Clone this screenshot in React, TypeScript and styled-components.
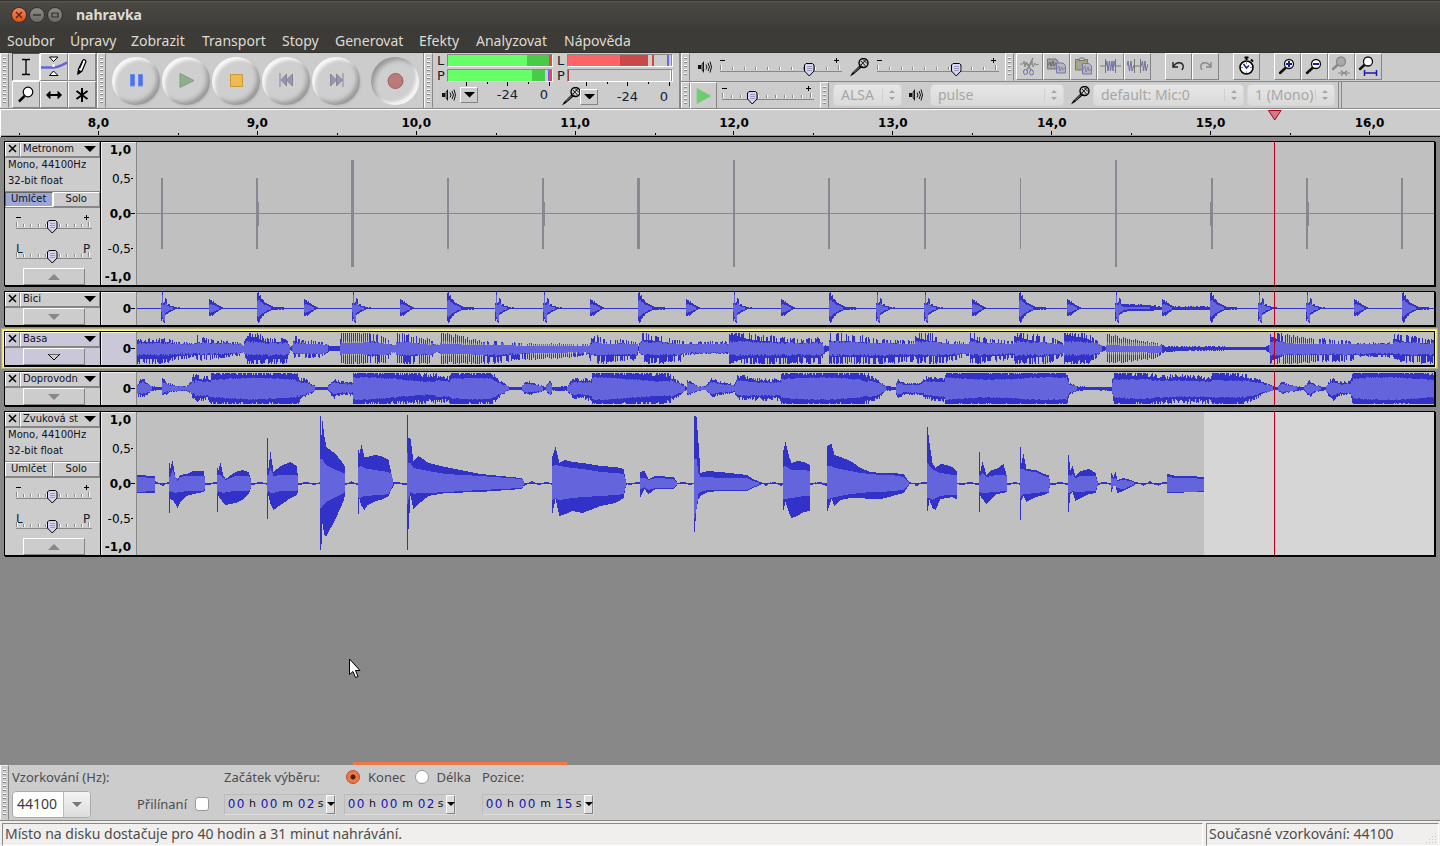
import React from "react";
import styled, { createGlobalStyle, css } from "styled-components";

const UI_FONT = '"Noto Sans", "Open Sans", sans-serif';
const TRACK_FONT = '"DejaVu Sans", sans-serif';

const GlobalStyle = createGlobalStyle`
  *, *::before, *::after { box-sizing: border-box; }
  body { margin: 0; background: #888; font-family: ${UI_FONT}; }
  button, input, select { margin: 0; padding: 0; font: inherit; color: inherit; border-radius: 0; }
  svg { display: block; flex: none; }
`;

const bevel = css`
  border: 1px solid;
  border-color: #fff #848484 #848484 #fff;
`;

/* ---------- window frame ---------- */

const Window = styled.div`
  display: flex;
  flex-direction: column;
  min-height: 100vh;
  overflow: hidden;
`;

const TitleBar = styled.header`
  display: flex;
  align-items: center;
  height: 28px;
  padding: 0 11px;
  gap: 2px;
  border-top: 1px solid #35342f;
  background: linear-gradient(#5a5954 0, #494843 2px, #3e3d39 100%);
`;

const WindowButton = styled.button<{ $close?: boolean }>`
  display: grid;
  place-items: center;
  width: 16px;
  height: 16px;
  border: 1px solid #33322e;
  border-radius: 50%;
  background: ${(p) => (p.$close ? "linear-gradient(#f7855a, #e0501c)" : "linear-gradient(#8b8a84, #6b6a65)")};
`;

const Title = styled.h1`
  margin: 0 0 0 11px;
  font-size: 14px;
  line-height: 20px;
  color: #dfdbd2;
`;

const MenuBar = styled.nav`
  display: grid;
  grid-template-columns: 63px 61px 71px 80px 53px 84px 57px 88px auto;
  justify-content: start;
  height: 25px;
  padding-left: 7px;
  background: #3c3b37;
  border-bottom: 1px solid #31302c;
`;

const MenuItem = styled.button`
  border: 0;
  background: none;
  text-align: left;
  white-space: nowrap;
  font-size: 14px;
  line-height: 26px;
  color: #dfdbd2;
`;

/* ---------- toolbars ---------- */

const ToolDock = styled.section`
  display: flex;
  height: 56px;
  background: #ccc;
  border-bottom: 1px solid #888;
`;

const DockStack = styled.div`
  display: flex;
  flex: 1;
  flex-direction: column;
  border-left: 2px solid #888;
`;

const DockRow = styled.div`
  display: flex;
  height: 28px;
  & + & { border-top: 1px solid #888; height: 27px; }
`;

const Grip = styled.div`
  flex: none;
  width: 9px;
  padding: 3px 2px;
  border: 1px solid;
  border-color: #eee #888 #ccc #fff;
  &::before {
    content: "";
    display: block;
    height: 100%;
    background: repeating-linear-gradient(#fff 0 1px, #888 1px 2px, transparent 2px 4px);
  }
`;

const ToolGrid = styled.div`
  display: grid;
  grid-template-columns: repeat(3, 28px);
  grid-template-rows: 28px 27px;
  margin-left: 3px;
  border-right: 1px solid #888;
`;

const ToolButton = styled.button<{ $down?: boolean }>`
  display: grid;
  place-items: center;
  ${bevel}
  ${(p) => p.$down && "border-color: #555 #fff #fff #555;"}
  background: #ccc;
`;

const TransportBar = styled.div`
  display: flex;
  align-items: center;
  gap: 2px;
  padding: 0 4px 0 6px;
  border-right: 1px solid #888;
`;

const RoundButton = styled.button<{ $down?: boolean }>`
  display: grid;
  place-items: center;
  width: 48px;
  height: 48px;
  border: 0;
  border-radius: 50%;
  background: #cfcfcf;
  box-shadow: ${(p) =>
    p.$down
      ? "inset 4px 4px 4px -1px #999, inset -4px -4px 3px -1px #f4f4f4"
      : "inset 4px 4px 3px -1px #f6f6f6, inset -4px -4px 4px -1px #999, 1px 1px 2px #bbb"};
  &:last-child { margin-left: 9px; }
`;

const MeterBar = styled.div`
  display: flex;
  gap: 4px;
  width: 246px;
  padding: 1px 2px 0 4px;
  font: 13px/14px ${TRACK_FONT};
  color: #123;
`;

const Meter = styled.div`
  display: grid;
  grid-template-columns: 10px 106px;
  grid-template-rows: 15px 13px 5px 16px;
`;

const MeterTrack = styled.div`
  display: flex;
  height: 13px;
  border: 1px solid;
  border-color: #888 #fff #fff #888;
`;

const Level = styled.i<{ $w: number; $c?: string }>`
  flex: none;
  width: ${(p) => p.$w}px;
  background: ${(p) => p.$c || "transparent"};
`;

const MeterFoot = styled.div`
  grid-column: 1 / 3;
  display: grid;
  grid-template-columns: 18px 18px 40px 30px;
  align-items: center;
  padding-left: 5px;
  text-align: right;
`;

const DropButton = styled.button`
  display: grid;
  place-items: center;
  width: 18px;
  height: 16px;
  ${bevel}
  background: #ccc;
`;

const Group = styled.div<{ $pad?: string; $gap?: number }>`
  display: flex;
  align-items: center;
  gap: ${(p) => p.$gap ?? 8}px;
  padding: ${(p) => p.$pad || "0"};
`;

const EditGroup = styled.div`
  display: flex;
  margin-left: 2px;
  & + & { margin-left: 14px; }
`;

const EditButton = styled.button`
  display: grid;
  place-items: center;
  width: 27px;
  height: 27px;
  ${bevel}
  background: #ccc;
`;

const SelectShell = styled.label<{ $w: number }>`
  display: flex;
  position: relative;
  width: ${(p) => p.$w}px;
  height: 22px;
  svg { position: absolute; right: 6px; top: 5px; pointer-events: none; }
`;

const SelectBox = styled.select`
  width: 100%;
  appearance: none;
  padding: 0 20px 0 7px;
  border: 1px solid #d6d6d6;
  border-radius: 4px;
  background: linear-gradient(#e6e6e6, #dadada);
  font-size: 14px;
  line-height: 20px;
  color: #a8a6a2;
  opacity: 1;
`;

const DeviceEnd = styled.div`
  width: 4px;
  margin-left: 3px;
  border: solid #888;
  border-width: 0 1px;
`;

/* ---------- timeline ---------- */

const Timeline = styled.div`
  display: grid;
  position: relative;
  grid-template-columns: repeat(9, 1fr);
  height: 28px;
  padding-left: 18px;
  margin-right: -9px;
  background: #ccc;
  border: solid #fff;
  border-width: 1px 0 0 1px;
  box-shadow: inset 0 -1px 0 #000, inset 0 -2px 0 #999;
`;

const Second = styled.div`
  display: flex;
  flex-direction: column;
  align-items: center;
  padding-top: 5px;
  background:
    linear-gradient(#000, #000) left 0 bottom 2px / 1px 2px no-repeat,
    linear-gradient(#000, #000) 50% calc(100% - 2px) / 1px 4px no-repeat;
  font: bold 12px/16px ${TRACK_FONT};
`;

const PlayMarker = styled.svg`
  position: absolute;
  left: 1267px;
  top: 0;
`;

/* ---------- tracks ---------- */

const TrackArea = styled.main`
  display: flex;
  position: relative;
  flex: 1;
  flex-direction: column;
  gap: 5px;
  padding: 4px 5px 8px 4px;
  background: #888;
`;

const TrackBox = styled.article<{ $focus?: boolean }>`
  display: grid;
  grid-template-columns: 95px 37px 1fr;
  border: 1px solid #000;
  background: #ccc;
  font-family: ${TRACK_FONT};
  ${(p) => p.$focus
    ? "background: #c9c7d8; box-shadow: 0 1px 0 #000, 0 0 0 1px #fff880, 0 0 0 2px #ece27c, 0 0 0 3px #aeac86;"
    : "box-shadow: 1px 1px 0 #000;"}
`;

const TrackPanel = styled.div`
  display: flex;
  flex-direction: column;
`;

const TrackHead = styled.div`
  display: grid;
  grid-template-columns: 15px 1fr;
  height: 16px;
  border-bottom: 1px solid #888;
`;

const HeadButton = styled.button`
  display: flex;
  align-items: center;
  justify-content: space-between;
  padding: 0 3px 2px 2px;
  ${bevel}
  background: none;
  font-size: 10px;
  line-height: 11px;
  color: #112;
  white-space: nowrap;
`;

const TrackInfo = styled.p`
  height: 35px;
  margin: -1px 0 0;
  padding-left: 3px;
  border-bottom: 1px solid #888;
  font-size: 10px;
  line-height: 16px;
  color: #112;
`;

const MuteRow = styled.div`
  display: grid;
  grid-template-columns: 1fr 1fr;
  height: 16px;
  border-bottom: 1px solid #888;
`;

const MuteButton = styled.button<{ $on?: boolean }>`
  padding-bottom: 2px;
  ${bevel}
  background: ${(p) => (p.$on ? "#9ca8d3" : "none")};
  ${(p) => p.$on && "border-color: #666 #fff #fff #666;"}
  font-size: 10px;
  line-height: 11px;
  color: #112;
`;

const PanelSliders = styled.div`
  display: flex;
  flex-direction: column;
  gap: 6px;
  padding: 6px 0 4px 11px;
`;

const FoldButton = styled.button`
  display: grid;
  place-items: center;
  width: 62px;
  height: 17px;
  margin-left: 18px;
  ${bevel}
  background: none;
`;

const VRuler = styled.div<{ $mini?: boolean }>`
  display: grid;
  grid-template-rows: ${(p) => (p.$mini ? "33px" : "15px 43px 27px 43px 13px")};
  align-items: center;
  border: solid;
  border-width: 0 1px 0 1px;
  border-color: #000;
  border-right-color: #888;
  box-shadow: inset 1px 1px 0 #eee;
  font-size: 12px;
  line-height: 14px;
`;

const Mark = styled.span<{ $bold?: boolean; $tick?: number }>`
  display: flex;
  align-items: center;
  justify-content: flex-end;
  padding-right: ${(p) => 5 - (p.$tick || 0)}px;
  font-weight: ${(p) => (p.$bold ? "bold" : "normal")};
  &::after {
    content: "";
    width: ${(p) => p.$tick || 0}px;
    height: 1px;
    background: #000;
  }
`;

const Wave = styled.svg`
  width: 100%;
  min-width: 0;
`;

const FocusStrip = styled.div`
  position: absolute;
  left: 353px;
  bottom: 0;
  width: 214px;
  height: 3px;
  background: #f07746;
`;

const Pointer = styled.svg`
  position: absolute;
  left: 348px;
  top: 521px;
`;

/* ---------- sliders ---------- */

const SliderShell = styled.label<{ $w: number; $tall?: boolean }>`
  position: relative;
  display: block;
  width: ${(p) => p.$w}px;
  height: ${(p) => (p.$tall ? 24 : 20)}px;
  input {
    position: absolute;
    inset: 0;
    width: 100%;
    height: 100%;
    opacity: 0;
  }
`;

/* ---------- selection bar and status ---------- */

const SelectionBar = styled.section`
  display: flex;
  height: 56px;
  background: #ccc;
  border-bottom: 1px solid #888;
  color: #4c4c4c;
`;

const SelectionGrid = styled.div`
  display: grid;
  grid-template-columns: 212px 120px 138px auto;
  grid-template-rows: 24px 30px;
  align-items: center;
  padding-left: 3px;
  font-size: 13px;
  line-height: 16px;
`;

const RateBox = styled.div`
  display: grid;
  grid-template-columns: 50px 27px;
  height: 27px;
  margin-right: 46px;
  border: 1px solid #aaa;
  border-radius: 4px;
  overflow: hidden;
  background: #fff;
  color: #3c3c3c;
  input { min-width: 0; border: 0; padding-left: 4px; font-size: 14px; background: none; }
  button { display: grid; place-items: center; border: 0; border-left: 1px solid #bbb; background: linear-gradient(#f4f4f4, #dcdcdc); }
`;

const Tick = styled.input`
  appearance: none;
  width: 14px;
  height: 14px;
  border: 1px solid #999;
  border-radius: 3px;
  background: #fff;
`;

const Radio = styled.input`
  appearance: none;
  width: 14px;
  height: 14px;
  border: 1px solid #999;
  border-radius: 50%;
  background: #fff;
  &:checked {
    border-color: #b5522c;
    background: radial-gradient(#4a2416 0 2px, #f07746 3px);
  }
`;

const ChoiceLabel = styled.label`
  display: flex;
  align-items: center;
  gap: 8px;
`;

const TimeBox = styled.div`
  display: flex;
  align-items: center;
  justify-self: start;
  height: 21px;
  padding-left: 2px;
  border: 1px solid;
  border-color: #bbb #ddd #ddd #bbb;
  font: 12px/16px ${TRACK_FONT};
  color: #111;
`;

const Unit = styled.span<{ $unit: string }>`
  width: ${(p) => ({ h: 15, m: 19, s: 11 })[p.$unit]}px;
  text-align: center;
  font-size: 11px;
`;

const Digit = styled.input`
  width: 9px;
  border: 0;
  background: none;
  text-align: center;
  color: #1414b4;
`;

const TimeDrop = styled.button`
  display: grid;
  place-items: center;
  width: 9px;
  height: 19px;
  ${bevel}
  background: #ddd;
`;

const StatusBar = styled.footer`
  display: grid;
  grid-template-columns: 1fr 233px;
  gap: 3px;
  height: 25px;
  padding: 2px 1px 0 2px;
  background: #f1efed;
  font-size: 14px;
  line-height: 22px;
  color: #4c4c4c;
`;

const StatusField = styled.div`
  display: flex;
  justify-content: space-between;
  align-items: flex-end;
  padding-left: 2px;
  border: 1px solid;
  border-color: #888 #fff #fff #888;
  overflow: hidden;
  white-space: nowrap;
`;

/* ---------- icons ---------- */

const Down = ({ w = 12, fill = "#000", up = false, line }: { w?: number; fill?: string; up?: boolean; line?: string }) => (
  <svg width={w} height={w / 2} viewBox="0 0 12 6">
    <path d={up ? "M0 6L6 0L12 6z" : "M0 0H12L6 6z"} fill={fill} stroke={line} />
  </svg>
);

const Speaker = () => (
  <svg width="14" height="14" viewBox="0 0 14 14" fill="none" stroke="#111">
    <path d="M0 5H3L6 1V13L3 9H0z" fill="#111" stroke="none" />
    <path d="M4 4V10" stroke="#ccc" />
    <path d="M8 4.500Q10 7 8 9.500M10 3Q13 7 10 11M12 1.500Q15 7 12 12.500" />
  </svg>
);

const Mic = () => (
  <svg width="19" height="19" viewBox="0 0 19 19">
    <path d="M0 18.500L2 15L10 7L12 9L4 16z" fill="#000" />
    <path d="M4 14.500L9.500 9" stroke="#999" />
    <circle cx="13.500" cy="5" r="4.500" fill="#ccc" stroke="#000" strokeWidth="1.400" />
    <path d="M9.500 6L13 9.500M11 3L15.500 8M13 1.500L17 5.500M16 1.500L11 7" stroke="#000" strokeWidth=".9" />
  </svg>
);

const Lens = ({ sign, dim, fit }: { sign?: "+" | "-"; dim?: boolean; fit?: boolean }) => {
  const ink = dim ? "#888" : "#111";
  return (
    <svg width="21" height="21" viewBox="0 0 21 21" fill="none">
      <path d={fit || dim ? "M2 13L7.500 8" : "M3 17L9 11.500"} stroke={ink} strokeWidth="2.500" strokeLinecap="round" />
      <circle cx={fit || dim ? 10 : 12} cy={fit || dim ? 5.5 : 8} r="4.500" fill={dim ? "#aaa" : "#fff"} stroke={ink} strokeWidth="1.300" />
      {sign && <path d={sign === "+" ? "M9 8H15M12 5V11" : "M9 8H15"} stroke="#1c1ca0" strokeWidth="2" />}
      {fit && <path d="M6.500 14V20M18.500 14V20M7 17H18" stroke="#1c1ca0" strokeWidth="1.500" />}
      {dim && <path d="M7 17H12M14 17H19M10 14.500L12.500 17L10 19.500M16 14.500L13.500 17L16 19.500" stroke="#888" strokeWidth="1.200" />}
    </svg>
  );
};

const ResizeDots = () => (
  <svg width="13" height="13" viewBox="0 0 13 13" shapeRendering="crispEdges">
    <path
      d="M10 1h1v1h-1zM7 4h1v1h-1zM10 4h1v1h-1zM4 7h1v1h-1zM7 7h1v1h-1zM10 7h1v1h-1zM1 10h1v1h-1zM4 10h1v1h-1zM7 10h1v1h-1zM10 10h1v1h-1z"
      fill="#cbc8c4"
    />
  </svg>
);

const toolIcons: Record<string, React.ReactNode> = {
  "Výběr": (
    <svg width="24" height="24" viewBox="0 0 24 24" fill="none" stroke="#000" strokeWidth="1.300">
      <path d="M8 4.500H11L12 5.500L13 4.500H16M8 19.500H11L12 18.500L13 19.500H16M12 5V19" />
    </svg>
  ),
  "Obálka": (
    <svg width="26" height="24" viewBox="0 0 26 24">
      <path d="M0 12.500H10Q16 13 26 7.500" fill="none" stroke="#6464dc" strokeWidth="2.500" />
      <path d="M8.500 2H17L12.500 6.500zM8.500 20.500H17L12.500 16z" fill="#fff" stroke="#000" />
      <circle cx="12.500" cy="10.500" r="1.500" fill="#fff" />
    </svg>
  ),
  "Kreslení": (
    <svg width="24" height="24" viewBox="0 0 24 24" stroke="#000">
      <path d="M8 19L8.500 14L13 5Q15 4 16 6.500L12 16z" fill="#fff" strokeWidth="1.200" />
      <path d="M8 19L8.500 15L11 16.500z" fill="#000" />
      <path d="M12.500 6.500L9.500 13.500" strokeWidth="1.200" />
    </svg>
  ),
  "Lupa": (
    <svg width="24" height="24" viewBox="0 0 24 24">
      <path d="M5 18.500L10.500 13" stroke="#000" strokeWidth="2.500" />
      <circle cx="14" cy="9" r="4.800" fill="#fff" stroke="#000" strokeWidth="1.200" />
    </svg>
  ),
  "Posun": (
    <svg width="24" height="24" viewBox="0 0 24 24" stroke="#000" fill="#000">
      <path d="M6 12H18" strokeWidth="2" />
      <path d="M4.500 12L8 8.500V15.500zM19.500 12L16 8.500V15.500z" />
    </svg>
  ),
  "Vše": (
    <svg width="24" height="24" viewBox="0 0 24 24" stroke="#000" strokeWidth="2">
      <path d="M12 5V19M6.500 8L17.500 16M17.500 8L6.500 16" />
    </svg>
  ),
};

const transportIcons: Record<string, React.ReactNode> = {
  "Pozastavit": <path d="M6.500 6.500H10.500V18H6.500zM14.500 6.500H18.500V18H14.500z" fill="#4a72ee" stroke="#6a8af0" />,
  "Přehrát": <path d="M6 5.500L20 12.500L6 19.500z" fill="#8fad8f" stroke="#7f9f7f" />,
  "Zastavit": <path d="M6.500 6.500H18.500V18.500H6.500z" fill="#efbb51" stroke="#c99a3a" />,
  "Na začátek": <path d="M6 5V19M18.500 6V18L12.500 12zM12.500 6V18L7 12z" fill="#9c94ac" stroke="#8a829c" />,
  "Na konec": <path d="M19 5V19M6.500 6V18L12.500 12zM12.500 6V18L18.500 12z" fill="#9c94ac" stroke="#8a829c" />,
  "Nahrát": <circle cx="12.500" cy="13" r="7.500" fill="#bd7878" stroke="#946464" />,
};

const editIcons: Record<string, React.ReactNode> = {
  cut: (
    <>
      <path d="M1 8H4L5 5L6 11L7 6L8 9H12L13 5L14 11L16 7L17 9L20 8" stroke="#888" />
      <path d="M14 2L8 14M8 7L12 14" stroke="#888" strokeWidth="1.500" />
      <ellipse cx="6.500" cy="16" rx="2" ry="2.500" stroke="#6a6aa8" />
      <ellipse cx="12.500" cy="16.500" rx="2" ry="2.500" stroke="#6a6aa8" />
    </>
  ),
  copy: (
    <>
      <path d="M1.500 3H10L12 5V13H1.500z" fill="#a2a2a2" stroke="#777" />
      <path d="M2 9L4 6L5 10L7 5L8 10L10 7" stroke="#666" />
      <path d="M10.500 7H17L19.500 9.500V17H10.500z" fill="#b4b4c4" stroke="#7777b0" />
      <path d="M11 13L13 10L14 15L16 11L17 14L19 12" stroke="#888" />
    </>
  ),
  paste: (
    <>
      <path d="M2.500 3.500H14.500V14H2.500z" fill="#aaa488" stroke="#777" />
      <path d="M5.500 4.500L7 2H10.500L12 4.500z" fill="#ccc" stroke="#777" />
      <path d="M9.500 7.500H16L18.500 10V18H9.500z" fill="#b4b4c4" stroke="#7777b0" />
      <path d="M10 13L12 10L13 16L15 11L16 15L18 13" stroke="#888" />
    </>
  ),
  trim: (
    <>
      <path d="M5.500 3V17M15.500 3V17M0 10H5M16 10H21" stroke="#777" />
      <path d="M6 10L7 5L8 15L9.500 5L10.500 15L12 5L13 15L14 5L15 10" stroke="#7070aa" />
    </>
  ),
  silence: (
    <>
      <path d="M7.500 3V17M13.500 3V17M8 10H13" stroke="#777" />
      <path d="M0 10L1 5L2.500 15L4 5L5 15L7 9M14 10L15.500 5L16.500 15L18 5L19 15L21 8" stroke="#7070aa" />
    </>
  ),
  undo: <path d="M5 6V11H10M5 11Q8 5.500 13 7Q17 9 14 14" stroke="#222" strokeWidth="1.400" />,
  redo: <path d="M16 6V11H11M16 11Q13 5.500 8 7Q4 9 7 14" stroke="#888" strokeWidth="1.400" />,
  clock: (
    <>
      <path d="M8.500 1.500H12.500M10.500 1V4M15 3.500L17 5.500" stroke="#000" strokeWidth="2" />
      <circle cx="10.500" cy="11.500" r="6.500" fill="#fff" stroke="#000" strokeWidth="1.600" />
      <path d="M10.500 5.500V8M10.500 15.500V17M5 11.500H7M14 11.500H16" stroke="#888" />
      <path d="M7.500 8L10.500 12L13 9.500" stroke="#1c1ca0" strokeWidth="1.500" />
    </>
  ),
};

const EditGlyph = ({ name }: { name: string }) => (
  <svg width="21" height="21" viewBox="0 0 21 21" fill="none">{editIcons[name]}</svg>
);

/* ---------- controls ---------- */

type SliderProps = { label: string; w: number; at: number; steps?: number; ends?: [string, string] };

const Slider = ({ label, w, at, steps = 10, ends }: SliderProps) => {
  const ticks = Array.from({ length: steps + 1 }, (_, i) => Math.round(1 + (i * (w - 4)) / steps));
  const top = ends ? 4 : 0;
  return (
    <SliderShell $w={w} $tall={!!ends}>
      <svg width={w} height={20 + top} shapeRendering="crispEdges">
        {ends ? (
          <g fontSize="12" fontFamily="DejaVu Sans" fill="#123">
            <text x="0" y="13">{ends[0]}</text>
            <text x={w - 9} y="13">{ends[1]}</text>
          </g>
        ) : (
          <path d={`M0 3.500H5M${w - 8} 3.500H${w - 3}M${w - 5.5} 1V6`} stroke="#000" />
        )}
        <g transform={`translate(0 ${top})`}>
          {ticks.map((x, i) => {
            const edge = i === 0 || i === steps;
            return (
              <React.Fragment key={x}>
                <rect x={x - 1} y={edge ? 8 : 10} width="1" height={edge ? 5 : 3} fill="#888" />
                <rect x={x} y={edge ? 8 : 10} width="1" height={edge ? 5 : 3} fill="#fff" />
              </React.Fragment>
            );
          })}
          <rect x="0" y="14" width={w} height="1" fill="#888" />
          <g transform={`translate(${at - 5} 6)`} shapeRendering="auto">
            <path d="M.5 2L2 .5H8.500L10 2V8L5.250 13L.5 8z" fill="#d4d4ee" stroke="#000" />
            <path d="M3 3.500H8M3 5.500H8M3 7.500H8" stroke="#9a9ac4" />
          </g>
        </g>
      </svg>
      <input type="range" min={0} max={w} defaultValue={at} aria-label={label} />
    </SliderShell>
  );
};

const DeviceSelect = ({ label, w, value }: { label: string; w: number; value: string }) => (
  <SelectShell $w={w}>
    <SelectBox disabled aria-label={label} defaultValue={value}>
      <option>{value}</option>
    </SelectBox>
    <svg width="14" height="12" viewBox="0 0 14 12">
      <path d="M0 -2V14" stroke="#c0c0c0" />
      <path d="M7 4L10 1L13 4zM7 8L10 11L13 8z" fill="#a6a6a6" />
    </svg>
  </SelectShell>
);

const TimeField = ({ label, value }: { label: string; value: string }) => (
  <TimeBox role="group" aria-label={label}>
    {["h", "m", "s"].map((unit, i) => (
      <React.Fragment key={unit}>
        <Digit defaultValue={value[i * 2]} maxLength={1} aria-label={`${label} ${unit} 1`} />
        <Digit defaultValue={value[i * 2 + 1]} maxLength={1} aria-label={`${label} ${unit} 2`} />
        <Unit $unit={unit}>{unit}</Unit>
      </React.Fragment>
    ))}
    <TimeDrop aria-label={`${label} formát`}><Down w={8} /></TimeDrop>
  </TimeBox>
);

/* ---------- waveforms ---------- */

const VIEW_W = 1297;
const LEFT = 137;
const PLAYHEAD = 1137;

type Column = [number, number, number, number];
type Key = number[];

const noise = (n: number) => {
  const v = Math.sin(n * 127.1 + 11.7) * 43758.5453;
  return v - Math.floor(v);
};

/* Linear interpolation between envelope keys, one value list per pixel column. */
const sample = (keys: Key[], x: number): number[] => {
  let i = 0;
  while (i < keys.length - 2 && keys[i + 1][0] <= x) i++;
  const a = keys[i];
  const b = keys[i + 1];
  const t = Math.max(0, Math.min(1, (x - a[0]) / (b[0] - a[0])));
  return a.slice(1).map((v, k) => v + (b[k + 1] - v) * t);
};

const columns = (fn: (x: number) => Column) => Array.from({ length: VIEW_W }, (_, i) => fn(i + LEFT));

const toPaths = (cols: Column[], mid: number): [string, string] => {
  let outer = "";
  let inner = "";
  cols.forEach(([u, d, iu, id], x) => {
    const [a, b, c, e] = [u, d, iu, id].map(Math.round);
    if (u >= 0) outer += `M${x} ${mid - a}h1V${mid + b + 1}h-1z`;
    if (c + e > 0) inner += `M${x} ${mid - c}h1V${mid + e + 1}h-1z`;
  });
  return [outer, inner];
};

/* Drum hits: one pixel profile per kind of hit. */
const hits: Record<string, [number[], number[], number[], number[]]> = {
  A: [
    [5, 16, 5, 6, 10, 9, 3, 4, 4, 2, 2, 2, 2, 1, 1, 1, 0, 1, 1],
    [12, 10, 13, 14, 6, 5, 5, 4, 3, 3, 2, 2, 1, 1, 0, 0, 0, 0, 0],
    [3, 13, 3, 3, 5, 4, 2, 2, 1, 1, 1, 1],
    [3, 8, 11, 12, 4, 3, 3, 2, 1, 1, 1, 1],
  ],
  B: [
    [9, 8, 8, 6, 7, 5, 5, 4, 3, 3, 2, 2, 1, 1, 0],
    [7, 7, 6, 7, 6, 5, 4, 3, 3, 2, 1, 1, 0, 0, 0],
    [3, 4, 4, 3, 3, 3, 2, 2, 1, 1],
    [3, 4, 3, 3, 3, 2, 2, 1, 1, 1],
  ],
  C: [
    [15, 16, 12, 13, 9, 9, 8, 6, 5, 5, 4, 4, 3, 3, 2, 2, 1, 1, 1, 1, 1, 1, 1, 1, 1, 1, 1, 0],
    [12, 14, 13, 10, 9, 7, 7, 5, 4, 4, 3, 3, 2, 2, 1, 1, 1, 1, 1, 1, 1, 0, 1, 1, 0, 1, 1, 0],
    [7, 8, 8, 6, 6, 5, 4, 3, 3, 3, 2, 2, 1, 1],
    [7, 8, 7, 6, 5, 4, 4, 3, 3, 2, 1, 1, 1, 1],
  ],
};

const drumHits: [string, number][] = [
  ["A", 161], ["B", 209], ["C", 257], ["B", 304], ["A", 352], ["B", 400], ["C", 447], ["A", 495], ["A", 543],
  ["B", 590], ["C", 638], ["B", 686], ["A", 733], ["B", 781], ["C", 829], ["A", 876], ["A", 924], ["B", 972],
  ["C", 1019], ["B", 1067], ["A", 1115], ["B", 1162], ["C", 1210], ["A", 1258], ["A", 1306], ["B", 1354], ["C", 1402],
];

const drumWave = columns((x) => {
  const out: Column = [0, 0, 0, 0];
  if (x > 1118 && x < 1212) {
    const s = x < 1156 ? 4 - (x - 1118) / 19 : 1;
    out[0] = s + noise(x) * 0.8;
    out[1] = s * 0.7;
    out[2] = x < 1150 ? 1 : 0;
  }
  drumHits.forEach(([kind, at]) => {
    const dx = x - at;
    if (dx < 0) return;
    hits[kind].forEach((profile, k) => {
      out[k] = Math.max(out[k], profile[dx] || 0);
    });
  });
  return out;
});

/* x, peak up, peak down, stripe depth */
const bassKeys: Key[] = [
  [137, 8, 14, 0.3], [165, 9, 14, 0.3], [175, 6, 11, 0.3], [195, 5, 8, 0.3], [197, 12, 11, 0.5], [205, 9, 11, 0.5],
  [220, 7, 9, 0.3], [238, 6, 7, 0.3], [243, 3, 4, 0.2], [247, 15, 15, 0.2], [256, 15, 15, 0.3], [265, 9, 15, 0.3],
  [286, 9, 14, 0.3], [290, 1, 1, 0], [292, 3, 3, 0], [293, 12, 8, 0.4], [300, 8, 9, 0.4], [320, 6, 8, 0.4],
  [330, 2, 2, 0], [339, 2, 2, 0], [341, 15, 15, 0.7], [362, 15, 15, 0.65], [372, 14, 15, 0.5], [386, 10, 14, 0.6],
  [391, 4, 4, 0.2], [395, 4, 4, 0.2], [396, 15, 15, 0.6], [405, 13, 15, 0.5], [430, 8, 14, 0.6], [434, 4, 4, 0.2],
  [439, 4, 4, 0.2], [440, 15, 15, 0.7], [455, 12, 15, 0.7], [480, 7, 15, 0.6], [495, 6, 14, 0.4], [515, 5, 11, 0.5],
  [535, 4, 10, 0.6], [560, 4, 9, 0.6], [588, 4, 6, 0.5], [590, 9, 12, 0.5], [597, 12, 14, 0.5], [605, 7, 14, 0.5],
  [620, 8, 12, 0.4], [636, 6, 11, 0.4], [638, 2, 2, 0], [642, 15, 12, 0.5], [650, 13, 15, 0.4], [665, 10, 14, 0.4],
  [680, 7, 12, 0.5], [684, 6, 6, 0.4], [700, 6, 5, 0.3], [728, 6, 5, 0.3], [729, 15, 15, 0.1], [748, 15, 15, 0.4],
  [760, 12, 15, 0.4], [780, 10, 15, 0.4], [800, 8, 14, 0.4], [820, 10, 15, 0.4], [823, 3, 5, 0.3], [828, 2, 2, 0],
  [829, 15, 15, 0.5], [850, 13, 15, 0.5], [880, 8, 15, 0.4], [914, 7, 12, 0.4], [916, 15, 14, 0.3], [930, 14, 14, 0.5],
  [945, 8, 14, 0.4], [960, 6, 9, 0.4], [969, 6, 7, 0.4], [970, 15, 14, 0.3], [980, 10, 14, 0.4], [995, 8, 12, 0.4],
  [1013, 7, 10, 0.4], [1014, 15, 15, 0.2], [1030, 13, 15, 0.4], [1050, 10, 14, 0.5], [1063, 5, 6, 0.4],
  [1064, 15, 15, 0.1], [1086, 14, 15, 0.3], [1095, 8, 10, 0.4], [1100, 4, 4, 0.2], [1105, 1, 1, 0], [1106, 14, 14, 0.8],
  [1125, 9, 13, 0.75], [1140, 7, 11, 0.7], [1155, 5, 9, 0.6], [1165, 2, 3, 0.3], [1200, 2, 2, 0.4], [1240, 1, 1, 0.4],
  [1265, 1, 1, 0], [1269, 3, 4, 0], [1270, 15, 15, 0.2], [1285, 13, 15, 0.6], [1300, 10, 14, 0.6], [1330, 8, 12, 0.5],
  [1345, 7, 13, 0.5], [1360, 5, 8, 0.3], [1392, 5, 8, 0.3], [1394, 13, 9, 0.3], [1405, 12, 14, 0.5], [1434, 8, 14, 0.5],
];

const bassWave = columns((x) => {
  const [u, d, depth] = sample(bassKeys, x);
  const regular = depth > 0.55;
  const low = regular ? x % 2 === 0 : noise(x) > 0.5;
  const lowD = regular ? x % 2 === 0 : noise(x + 900) > 0.62;
  const up = Math.min(15, low ? Math.max(1, u * (1 - depth)) : u * (0.9 + noise(x + 50) * 0.25));
  const down = Math.min(15, lowD ? Math.max(1, d * (1 - depth)) : d * (0.88 + noise(x + 70) * 0.2));
  const core = u < 3 ? 0 : Math.min(up, 2 + u * 0.22 + noise(x + 7) * 2);
  return [up, down, core, u < 3 ? 0 : Math.min(down, 2 + d * 0.2 + noise(x + 9) * 2)];
});

const chordKeys: Key[] = [
  [137, 4, 7], [142, 12, 8], [145, 7, 7], [151, 2, 2], [161, 1, 1], [162, 10, 7], [168, 5, 4], [178, 2, 2], [186, 2, 2],
  [190, 6, 4], [193, 15, 11], [200, 11, 12], [206, 12, 10], [210, 9, 14], [211, 18, 18], [295, 18, 18], [300, 9, 12],
  [304, 10, 9], [310, 5, 5], [316, 1, 1], [327, 1, 1], [331, 7, 6], [334, 10, 9], [340, 7, 6], [352, 6, 6],
  [353, 19, 19], [395, 18, 16], [430, 15, 14], [449, 11, 13], [451, 19, 19], [490, 17, 17], [498, 9, 10], [506, 3, 3],
  [510, 1, 1], [521, 1, 1], [524, 6, 5], [529, 7, 6], [540, 3, 3], [545, 1, 1], [550, 9, 8], [552, 1, 2], [567, 2, 2],
  [573, 10, 10], [580, 9, 9], [591, 10, 12], [592, 19, 19], [640, 18, 18], [668, 15, 15], [680, 6, 6], [686, 1, 1],
  [687, 9, 7], [698, 2, 2], [705, 2, 1], [711, 10, 8], [718, 7, 6], [734, 4, 4], [737, 14, 10], [750, 10, 11],
  [765, 9, 11], [780, 9, 11], [781, 19, 19], [860, 18, 18], [878, 8, 10], [885, 2, 2], [895, 1, 1], [897, 9, 10],
  [905, 5, 5], [920, 5, 6], [925, 12, 10], [944, 9, 13], [945, 19, 19], [1066, 19, 19], [1069, 5, 6], [1076, 2, 2],
  [1090, 1, 1], [1111, 1, 2], [1112, 9, 6], [1114, 19, 19], [1145, 16, 18], [1155, 13, 15], [1180, 13, 13],
  [1210, 11, 14], [1212, 19, 19], [1240, 15, 17], [1255, 10, 10], [1262, 7, 5], [1272, 2, 2], [1277, 1, 1],
  [1282, 7, 5], [1290, 3, 3], [1303, 1, 1], [1309, 8, 8], [1315, 3, 3], [1325, 1, 1], [1331, 10, 12], [1340, 6, 6],
  [1350, 7, 6], [1353, 19, 19], [1434, 19, 19],
];

const chordWave = columns((x) => {
  const [u, d] = sample(chordKeys, x);
  const up = Math.min(15, u * (0.7 + noise(x + 3) * 0.4));
  const down = Math.min(15, d * (0.72 + noise(x + 33) * 0.4));
  const swell = u > 14 ? 1.2 * Math.sin(x / 18) - 1 : 0;
  return [up, down, u < 2 ? 0 : Math.min(up, u * 0.52 + swell + noise(x) * 1.2), u < 2 ? 0 : Math.min(down, d * 0.53 + swell + noise(x + 5) * 1.2)];
});

/* x, outer up, outer down, inner up, inner down */
const voiceNotes: Key[][] = [
  [[137, 8, 9, 6, 8], [154, 7, 9, 5, 7]],
  [[169, 20, 29, 6, 8], [170, 15, 15, 7, 7], [172, 22, 16, 13, 8], [175, 6, 20, 6, 9], [177, 4, 24, 2, 8], [180, 8, 18, 6, 8], [186, 9, 12, 7, 7], [193, 12, 10, 7, 7], [203, 12, 8, 7, 7], [204, 7, 7, 6, 5]],
  [[217, 15, 28, 8, 9], [218, 13, 12, 8, 7], [220, 20, 15, 8, 8], [223, 7, 19, 5, 9], [225, 4, 21, 3, 8], [235, 11, 19, 7, 7], [242, 13, 16, 7, 7], [248, 11, 10, 7, 7], [250, 5, 5, 4, 4]],
  [[267, 45, 35, 8, 9], [268, 15, 12, 8, 7], [270, 31, 20, 15, 9], [273, 11, 26, 7, 9], [280, 17, 21, 8, 7], [290, 21, 14, 8, 7], [296, 17, 11, 8, 7], [297, 10, 9, 7, 6]],
  [[320, 67, 66, 24, 24], [321, 48, 60, 24, 24], [322, 62, 40, 24, 22], [324, 46, 51, 20, 20], [326, 36, 52, 18, 18], [335, 29, 35, 13, 13], [343, 19, 17, 10, 9], [344, 17, 13, 10, 8]],
  [[358, 33, 30, 16, 14], [359, 30, 15, 16, 14], [361, 38, 22, 17, 13], [364, 26, 26, 15, 12], [367, 26, 21, 14, 12], [375, 28, 17, 13, 11], [380, 27, 16, 12, 11], [388, 23, 12, 11, 10], [391, 9, 5, 9, 4], [393, 1, 2, 0, 0]],
  [[407, 68, 66, 30, 20], [408, 45, 45, 20, 15], [410, 44, 12, 20, 8], [413, 22, 25, 15, 10], [418, 27, 20, 14, 9], [428, 20, 12, 12, 9], [445, 16, 9, 9, 8], [480, 9, 8, 7, 6], [521, 5, 5, 4, 4], [523, 2, 2, 1, 1]],
  [[552, 27, 29, 17, 16], [555, 36, 15, 18, 14], [559, 20, 32, 17, 16], [565, 23, 30, 16, 15], [572, 21, 27, 15, 14], [582, 20, 29, 14, 13], [600, 17, 22, 11, 12], [615, 16, 19, 10, 11], [623, 14, 14, 9, 10], [625, 4, 4, 3, 3]],
  [[640, 11, 13, 5, 5], [644, 12, 5, 5, 3], [648, 4, 10, 3, 6], [655, 7, 5, 5, 4], [673, 6, 5, 4, 4], [676, 2, 2, 1, 1]],
  [[694, 67, 48, 24, 34], [696, 66, 25, 24, 24], [698, 40, 15, 10, 10], [700, 10, 12, 6, 8], [707, 12, 8, 6, 6], [720, 11, 7, 5, 6], [747, 8, 7, 5, 6], [752, 4, 4, 2, 3], [760, 1, 1, 0, 0]],
  [[783, 33, 26, 16, 15], [785, 41, 18, 17, 15], [789, 25, 30, 14, 14], [791, 20, 34, 13, 14], [797, 22, 32, 13, 13], [803, 21, 28, 13, 12], [809, 18, 27, 12, 12]],
  [[827, 37, 27, 17, 15], [831, 39, 15, 17, 14], [834, 28, 22, 15, 13], [840, 26, 16, 14, 12], [850, 22, 14, 12, 10], [860, 15, 14, 10, 9], [870, 11, 15, 9, 8], [880, 10, 15, 8, 8], [892, 10, 12, 8, 7], [903, 9, 9, 6, 6], [908, 2, 2, 1, 1]],
  [[927, 56, 27, 20, 14], [929, 40, 16, 17, 14], [932, 20, 24, 14, 16], [935, 15, 26, 12, 14], [940, 19, 15, 10, 12], [946, 18, 14, 9, 11], [952, 16, 13, 8, 11], [956, 12, 15, 8, 11]],
  [[979, 31, 28, 8, 8], [980, 12, 12, 7, 8], [982, 21, 15, 10, 9], [986, 8, 20, 6, 9], [991, 13, 15, 7, 8], [996, 14, 10, 8, 8], [1003, 19, 9, 8, 7], [1006, 8, 8, 7, 7]],
  [[1020, 36, 36, 14, 14], [1021, 20, 16, 14, 12], [1023, 29, 12, 14, 10], [1026, 14, 18, 12, 10], [1035, 13, 13, 11, 9], [1043, 9, 11, 7, 8], [1048, 8, 9, 6, 8], [1049, 4, 4, 3, 3]],
  [[1068, 28, 28, 8, 9], [1070, 13, 10, 7, 8], [1072, 17, 8, 9, 7], [1075, 7, 17, 5, 8], [1080, 12, 14, 7, 8], [1089, 14, 10, 7, 7], [1095, 10, 9, 7, 7], [1097, 2, 2, 1, 1]],
  [[1111, 10, 8, 5, 4], [1113, 6, 2, 4, 2], [1115, 11, 2, 5, 2], [1117, 3, 9, 2, 4], [1123, 5, 7, 3, 5], [1130, 3, 3, 2, 2], [1134, 1, 1, 0, 0]],
  [[1167, 9, 9, 6, 8], [1176, 7, 9, 5, 8], [1190, 7, 8, 5, 8], [1203, 6, 8, 4, 7]],
];

const voiceWave = columns((x) => {
  if (x > 1203) return [-1, -1, 0, 0];
  const note = voiceNotes.find((n) => x >= n[0][0] && x <= n[n.length - 1][0]);
  if (note) return sample(note, x) as Column;
  const sway = Math.round(Math.sin(x / 2.4) * 1.2 + noise(Math.floor(x / 3)) - 0.5);
  return [sway > 0 ? sway : 0, sway > 0 ? 0 : -sway, 0, 0];
});

const clicks = [161, 256, 351, 447, 542, 637, 733, 828, 924, 1020, 1115, 1211, 1306, 1401];

const Waveform = ({ cols, h, mid, clipEnd }: { cols: Column[]; h: number; mid: number; clipEnd?: number }) => {
  const [outer, inner] = toPaths(cols, mid);
  return (
    <Wave height={h} viewBox={`0 0 ${VIEW_W} ${h}`} preserveAspectRatio="none" shapeRendering="crispEdges">
      <rect width={VIEW_W} height={h} fill="#c0c0c0" />
      {clipEnd && <rect x={clipEnd} width={VIEW_W - clipEnd} height={h} fill="#d6d6d6" />}
      <path d={outer} fill="#3232c8" />
      <path d={inner} fill="#6464dc" />
      <rect x={PLAYHEAD} width="1" height={h} fill="#c00020" />
    </Wave>
  );
};

const ClickWaveform = () => (
  <Wave height="143" viewBox={`0 0 ${VIEW_W} 143`} preserveAspectRatio="none" shapeRendering="crispEdges">
    <rect width={VIEW_W} height="143" fill="#c0c0c0" />
    <g fill="#888890">
      <rect y="71" width={VIEW_W} height="1" />
      {clicks.map((x, i) => {
        const reach = i % 4 === 2 ? 53 : 35;
        return <rect key={x} x={x - LEFT} y={71 - reach} width={x === 1020 ? 1 : i % 4 === 2 && x < 400 ? 3 : 2} height={reach * 2 + 1} />;
      })}
      {[639, 829, 1402].map((x) => <rect key={x} x={x - LEFT} y="36" width="1" height="71" />)}
      {[258, 544, 1210, 1308].map((x) => <rect key={x} x={x - LEFT} y="60" width="1" height="24" />)}
    </g>
    <rect x={PLAYHEAD} width="1" height="143" fill="#c00020" />
  </Wave>
);

type TrackProps = { name: string; open?: boolean; muted?: boolean; focus?: boolean; children: React.ReactNode };

const Track = ({ name, open, muted, focus, children }: TrackProps) => (
  <TrackBox $focus={focus}>
    <TrackPanel>
      <TrackHead>
        <HeadButton aria-label={`Zavřít ${name}`}>
          <svg width="9" height="9" viewBox="0 0 9 9"><path d="M1 1L8 8M8 1L1 8" stroke="#000" strokeWidth="1.500" /></svg>
        </HeadButton>
        <HeadButton>{name}<Down /></HeadButton>
      </TrackHead>
      {open && (
        <>
          <TrackInfo>Mono, 44100Hz<br />32-bit float</TrackInfo>
          <MuteRow>
            <MuteButton $on={muted}>Umlčet</MuteButton>
            <MuteButton>Solo</MuteButton>
          </MuteRow>
          <PanelSliders>
            <Slider label="Hlasitost" w={76} at={36} />
            <Slider label="Vyvážení" w={76} at={36} ends={["L", "P"]} />
          </PanelSliders>
        </>
      )}
      <FoldButton aria-label={open ? "Sbalit" : "Rozbalit"}>
        <Down up={open} fill={focus ? "#ccc" : "#888"} line={focus ? "#000" : undefined} />
      </FoldButton>
    </TrackPanel>
    {open ? (
      <VRuler>
        <Mark $bold>1,0</Mark>
        <Mark $tick={2}>0,5</Mark>
        <Mark $bold $tick={4}>0,0</Mark>
        <Mark $tick={2}>-0,5</Mark>
        <Mark $bold>-1,0</Mark>
      </VRuler>
    ) : (
      <VRuler $mini><Mark $bold $tick={4}>0</Mark></VRuler>
    )}
    {children}
  </TrackBox>
);

const MeterTicks = () => (
  <svg width="106" height="5" shapeRendering="crispEdges">
    <path d="M19.500 0V4M40.500 0V2M60.500 0V4M81.500 0V2M102.500 0V4" stroke="#000" />
  </svg>
);

export default function App() {
  return (
    <Window>
      <GlobalStyle />
      <TitleBar>
        <WindowButton $close aria-label="Zavřít">
          <svg width="8" height="8" viewBox="0 0 8 8"><path d="M1 1L7 7M7 1L1 7" stroke="#5a2410" strokeWidth="1.400" /></svg>
        </WindowButton>
        <WindowButton aria-label="Minimalizovat">
          <svg width="8" height="8" viewBox="0 0 8 8"><path d="M0 4H8" stroke="#33322e" strokeWidth="1.400" /></svg>
        </WindowButton>
        <WindowButton aria-label="Maximalizovat">
          <svg width="8" height="8" viewBox="0 0 8 8"><path d="M1 2H7V6H1z" fill="none" stroke="#33322e" strokeWidth="1.200" /></svg>
        </WindowButton>
        <Title>nahravka</Title>
      </TitleBar>
      <MenuBar>
        {["Soubor", "Úpravy", "Zobrazit", "Transport", "Stopy", "Generovat", "Efekty", "Analyzovat", "Nápověda"].map((m) => (
          <MenuItem key={m}>{m}</MenuItem>
        ))}
      </MenuBar>

      <ToolDock>
        <Grip />
        <ToolGrid>
          {Object.entries(toolIcons).map(([name, icon], i) => (
            <ToolButton key={name} aria-label={name} $down={i === 0}>{icon}</ToolButton>
          ))}
        </ToolGrid>
        <Grip />
        <TransportBar>
          {Object.entries(transportIcons).map(([name, icon]) => (
            <RoundButton key={name} aria-label={name} $down={name === "Nahrát"}>
              <svg width="25" height="25" viewBox="0 0 25 25">{icon}</svg>
            </RoundButton>
          ))}
        </TransportBar>
        <Grip />
        <MeterBar>
          <Meter>
            <span>L</span>
            <MeterTrack><Level $w={79} $c="#66ff66" /><Level $w={22} $c="#48cc48" /><Level $w={1} $c="#6464ff" /><Level $w={2} $c="#ff3c3c" /></MeterTrack>
            <span>P</span>
            <MeterTrack><Level $w={84} $c="#66ff66" /><Level $w={13} $c="#48cc48" /><Level $w={3} /><Level $w={2} $c="#6464ff" /><Level $w={2} $c="#ff3c3c" /></MeterTrack>
            <span />
            <MeterTicks />
            <MeterFoot>
              <Speaker />
              <DropButton aria-label="Výstup"><Down w={11} /></DropButton>
              <span>-24</span>
              <span>0</span>
            </MeterFoot>
          </Meter>
          <Meter>
            <span>L</span>
            <MeterTrack><Level $w={52} $c="#ff6464" /><Level $w={28} $c="#cc4848" /><Level $w={4} /><Level $w={2} $c="#cc4848" /><Level $w={13} /><Level $w={2} $c="#6464ff" /><Level $w={2} /><Level $w={1} $c="#888" /></MeterTrack>
            <span>P</span>
            <MeterTrack><Level $w={1} $c="#a04040" /><Level $w={101} /><Level $w={1} $c="#fff" /><Level $w={1} $c="#888" /></MeterTrack>
            <span />
            <MeterTicks />
            <MeterFoot>
              <Mic />
              <DropButton aria-label="Vstup"><Down w={11} /></DropButton>
              <span>-24</span>
              <span>0</span>
            </MeterFoot>
          </Meter>
        </MeterBar>

        <DockStack>
          <DockRow>
            <Grip />
            <Group $pad="0 6px 0 8px">
              <Speaker />
              <Slider label="Hlasitost výstupu" w={122} at={89} />
              <Mic />
              <Slider label="Hlasitost vstupu" w={122} at={79} />
            </Group>
            <Grip />
            <EditGroup>
              {["cut", "copy", "paste", "trim", "silence"].map((n) => <EditButton key={n} aria-label={n}><EditGlyph name={n} /></EditButton>)}
            </EditGroup>
            <EditGroup>
              {["undo", "redo"].map((n) => <EditButton key={n} aria-label={n}><EditGlyph name={n} /></EditButton>)}
            </EditGroup>
            <EditGroup>
              <EditButton aria-label="Časovač"><EditGlyph name="clock" /></EditButton>
            </EditGroup>
            <EditGroup>
              <EditButton aria-label="Přiblížit"><Lens sign="+" /></EditButton>
              <EditButton aria-label="Oddálit"><Lens sign="-" /></EditButton>
              <EditButton aria-label="Přizpůsobit výběr"><Lens dim /></EditButton>
              <EditButton aria-label="Přizpůsobit projekt"><Lens fit /></EditButton>
            </EditGroup>
          </DockRow>
          <DockRow>
            <Grip />
            <EditButton aria-label="Přehrát rychlostí">
              <svg width="16" height="18" viewBox="0 0 16 18"><path d="M1 1.500L15 9L1 16.500z" fill="#6ecb6e" stroke="#8c8" /></svg>
            </EditButton>
            <Group $pad="0 6px 0 5px"><Slider label="Rychlost" w={92} at={30} /></Group>
            <Grip />
            <Group $pad="0 0 0 4px" $gap={7}>
              <DeviceSelect label="Hostitel" w={69} value="ALSA" />
              <Speaker />
              <DeviceSelect label="Výstupní zařízení" w={134} value="pulse" />
              <Mic />
            </Group>
            <Group $pad="0 0 0 3px" $gap={3}>
              <DeviceSelect label="Vstupní zařízení" w={151} value="default: Mic:0" />
              <DeviceSelect label="Kanály" w={88} value="1 (Mono)" />
            </Group>
            <DeviceEnd />
          </DockRow>
        </DockStack>
      </ToolDock>

      <Timeline>
        {[8, 9, 10, 11, 12, 13, 14, 15, 16].map((s) => <Second key={s}>{s},0</Second>)}
        <PlayMarker width="14" height="11" viewBox="0 0 14 11">
          <path d="M.5 .5H13L6.750 10z" fill="#cc7c84" stroke="#b00020" />
        </PlayMarker>
      </Timeline>

      <TrackArea>
        <Track name="Metronom" open muted><ClickWaveform /></Track>
        <Track name="Bici"><Waveform cols={drumWave} h={33} mid={16} /></Track>
        <Track name="Basa" focus><Waveform cols={bassWave} h={33} mid={16} /></Track>
        <Track name="Doprovodn"><Waveform cols={chordWave} h={33} mid={16} /></Track>
        <Track name="Zvuková st" open><Waveform cols={voiceWave} h={143} mid={71} clipEnd={1067} /></Track>
        <Pointer width="14" height="21" viewBox="0 0 14 21">
          <path d="M1.500 1V16.500L5 13.500L7.500 19.500L10 18.500L7.500 12.500H12z" fill="#fff" stroke="#000" />
        </Pointer>
        <FocusStrip />
      </TrackArea>

      <SelectionBar>
        <Grip />
        <SelectionGrid>
          <label htmlFor="rate">Vzorkování (Hz):</label>
          <span>Začátek výběru:</span>
          <Group $gap={9} $pad="0 0 0 2px">
            <ChoiceLabel><Radio type="radio" name="range" defaultChecked />Konec</ChoiceLabel>
            <ChoiceLabel><Radio type="radio" name="range" />Délka</ChoiceLabel>
          </Group>
          <span>Pozice:</span>
          <Group $gap={0}>
            <RateBox>
              <input id="rate" defaultValue="44100" />
              <button aria-label="Zvolit vzorkování"><Down w={10} fill="#777" /></button>
            </RateBox>
            <ChoiceLabel>Přilínaní<Tick type="checkbox" /></ChoiceLabel>
          </Group>
          <TimeField label="Začátek výběru" value="000002" />
          <TimeField label="Konec výběru" value="000002" />
          <TimeField label="Pozice" value="000015" />
        </SelectionGrid>
      </SelectionBar>
      <StatusBar>
        <StatusField>Místo na disku dostačuje pro 40 hodin a 31 minut nahrávání.</StatusField>
        <StatusField>Současné vzorkování: 44100<ResizeDots /></StatusField>
      </StatusBar>
    </Window>
  );
}
